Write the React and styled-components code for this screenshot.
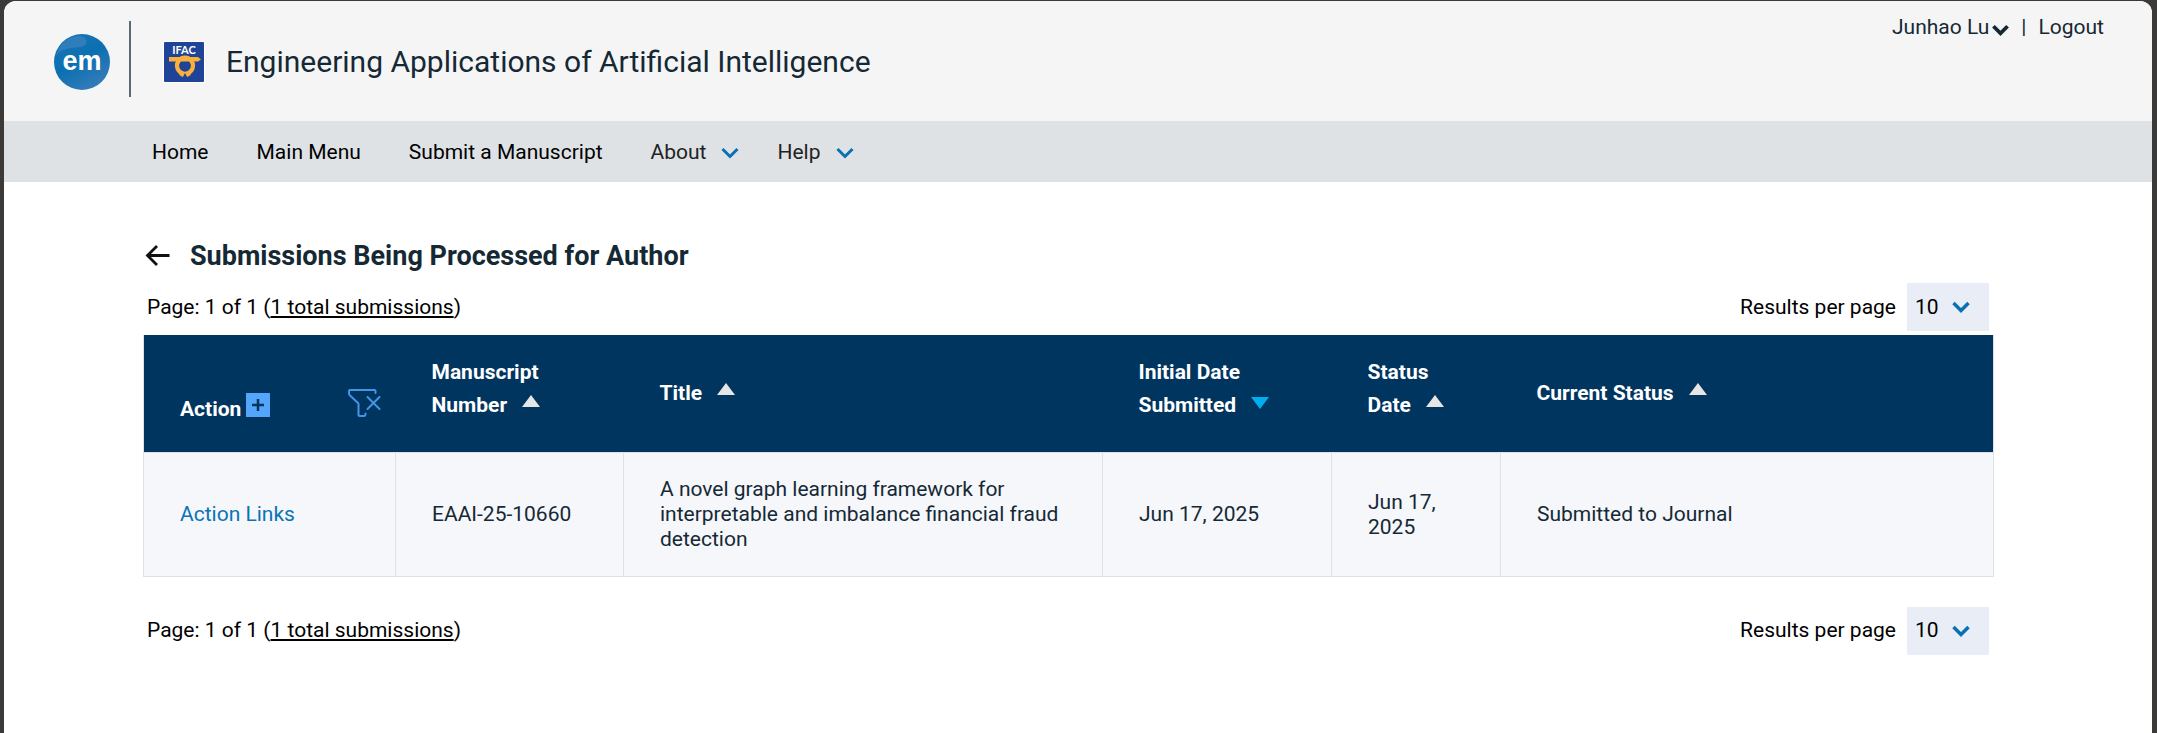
import React from "react";
import styled, { createGlobalStyle } from "styled-components";

const GlobalStyle = createGlobalStyle`
  *, *::before, *::after { box-sizing: border-box; }
  html { background: #3b3a39; }
  body { margin: 0; font-family: Roboto, "Liberation Sans", sans-serif; font-size: 21px; line-height: 25px; color: #000; }
  a { color: inherit; text-decoration: none; }
  button { font: inherit; color: inherit; background: none; border: 0; padding: 0; cursor: pointer; }
`;

const Frame = styled.div`
  min-height: 100vh;
  padding: 1px 5px 0 4px;
  display: flex;
`;

const Page = styled.div`
  flex: 1;
  min-width: 0;
  background: #fff;
  border-radius: 12px 12px 0 0;
  overflow: hidden;
`;

const Header = styled.header`
  display: flex;
  justify-content: space-between;
  align-items: flex-start;
  min-height: 120px;
  padding: 0 48px;
  background: #f5f5f5;
  color: #152935;
`;

const Brand = styled.div`
  display: flex;
  align-items: center;
  min-height: 82px;
  margin-top: 20px;
`;

const BrandRule = styled.span`
  align-self: flex-start;
  width: 2px;
  height: 76px;
  margin: 0 32px 0 17px;
  background: #5b6b73;
`;

const JournalName = styled.h1`
  margin: 0 0 0 21px;
  font-size: 30px;
  line-height: 40px;
  font-weight: 400;
`;

const Account = styled.div`
  display: flex;
  align-items: center;
  padding-top: 14px;
  gap: 12px;
`;

const AccountButton = styled.button`
  display: flex;
  align-items: center;
  gap: 3px;

  & > svg { margin-top: 5px; }
`;

const Nav = styled.nav`
  display: flex;
  align-items: center;
  gap: 48px;
  min-height: 61px;
  padding: 2px 148px 0;
  background: #dee2e5;
`;

const NavMenu = styled.button`
  display: flex;
  align-items: center;
  gap: 15px;
  color: #222;

  & + & { margin-left: -10px; }
`;

const Main = styled.main`
  padding: 58px 158px 40px 139px;
`;

const TitleRow = styled.div`
  display: flex;
  align-items: center;
  gap: 19px;
  padding-left: 2px;
`;

const BackButton = styled.button`
  display: flex;
`;

const PageTitle = styled.h2`
  margin: 0;
  font-size: 27px;
  line-height: 32px;
  font-weight: 700;
  color: #152935;
`;

const Pager = styled.div`
  display: flex;
  justify-content: space-between;
  align-items: center;
  padding: 0 5px 0 4px;
  margin-top: ${(p) => p.$gap}px;
`;

const TotalLink = styled.a`
  text-decoration: underline;
  text-decoration-thickness: 2px;
  text-underline-offset: 2px;
  text-decoration-skip-ink: none;
`;

const PerPage = styled.label`
  display: flex;
  align-items: center;
  gap: 11px;
`;

const SelectWrap = styled.span`
  display: grid;
  align-items: center;
  width: 82px;
  height: 48px;
  background: #e9eef6;

  & > * { grid-area: 1 / 1; }
  & > svg { justify-self: end; margin-right: 19px; pointer-events: none; }
`;

const Select = styled.select`
  appearance: none;
  width: 100%;
  height: 100%;
  padding: 0 8px;
  border: 0;
  background: transparent;
  font: inherit;
  color: #000;
`;

const Table = styled.table`
  width: 100%;
  margin-top: 4px;
  table-layout: fixed;
  border-collapse: collapse;
  border: 1px solid #dee2e6;
  border-top: 0;
`;

const Col = styled.col`
  width: ${(p) => p.$w};
`;

const HeadCell = styled.th`
  height: 117px;
  padding: 0 36px ${(p) => (p.$twoLine ? 9 : 0)}px;
  background: #003560;
  color: #fff;
  text-align: left;
  vertical-align: middle;
  font-weight: 700;
  line-height: 33px;
`;

const ActionHead = styled.div`
  display: flex;
  justify-content: space-between;
  align-items: flex-end;
  padding-top: 28px;
  margin-right: -21px;
`;

const ActionLabel = styled.span`
  display: flex;
  align-items: flex-end;
  gap: 5px;
`;

const ExpandButton = styled.button`
  display: flex;
  align-items: center;
  justify-content: center;
  width: 24px;
  height: 24px;
  margin-bottom: 9px;
  background: #54a6fb;
`;

const FilterButton = styled.button`
  display: flex;
  margin-bottom: 9px;
`;

const SortButton = styled.button`
  text-align: left;
  font-weight: 700;
  line-height: 33px;

  & > svg { margin-left: 15px; vertical-align: ${(p) => (p.$down ? 3 : 5)}px; }
`;

const Cell = styled.td`
  height: 124px;
  padding: 1px 36px 0;
  border: 1px solid #dee2e6;
  background: #f5f7fb;
  color: #152935;
  vertical-align: middle;
`;

const ActionLink = styled.a`
  color: #0a73b5;
`;

const Chevron = ({ color = "#0a6fb3", w = 18, stroke = 3 }) => (
  <svg width={w} height="12" viewBox="0 0 18 12" aria-hidden="true">
    <path d="M1.5 2 L9 9.5 L16.5 2" fill="none" stroke={color} strokeWidth={stroke} />
  </svg>
);

const SortArrow = ({ down }) => (
  <svg width="18" height="12" viewBox="0 0 18 12" aria-hidden="true">
    {down ? <path d="M0 0 H18 L9 12 Z" fill="#00aeef" /> : <path d="M0 12 H18 L9 0 Z" fill="#e6e6e6" />}
  </svg>
);

const EmLogo = () => (
  <svg width="60" height="60" viewBox="0 0 60 60" role="img" aria-label="em">
    <defs>
      <linearGradient id="emFill" x1="0.2" y1="0" x2="0.8" y2="1">
        <stop offset="0" stopColor="#1a74b6" />
        <stop offset="0.45" stopColor="#0a70b1" />
        <stop offset="1" stopColor="#3b7dbb" />
      </linearGradient>
    </defs>
    <circle cx="30" cy="30" r="28" fill="url(#emFill)" />
    <path d="M4 24 C7 11 17 4 28 4 C36 5 37 13 29 15 C19 16 9 16 4 24 Z" fill="#2f7dbb" />
    <text x="30" y="38" textAnchor="middle" fontFamily="Liberation Sans, sans-serif" fontWeight="700" fontSize="27" fill="#fff">em</text>
  </svg>
);

const IfacLogo = () => (
  <svg width="42" height="42" viewBox="0 0 42 42" role="img" aria-label="IFAC">
    <rect width="42" height="42" rx="2" fill="#fff" />
    <rect x="1" y="1" width="40" height="40" rx="1" fill="#1f4397" />
    <text x="21" y="13" textAnchor="middle" fontFamily="Lato, sans-serif" fontWeight="700" fontSize="11" fill="#fff">IFAC</text>
    <path d="M6 16 H35 L38 18.5 L35 20.5 H6 Z" fill="#fbb03b" />
    <path d="M18 35 L19.500 32.300 A8 8 0 1 1 24.500 32.300 L26 35" fill="none" stroke="#fbb03b" strokeWidth="4.200" />
  </svg>
);

const BackArrow = () => (
  <svg width="26" height="22" viewBox="0 0 26 22" aria-hidden="true">
    <path d="M24.500 10.500 H2.500 M12 1 L2.500 10.500 L12 20" fill="none" stroke="#111" strokeWidth="2.800" />
  </svg>
);

const FilterClear = () => (
  <svg width="33" height="28" viewBox="0 0 33 28" fill="none" stroke="#4595e6" strokeWidth="2" strokeLinejoin="round" strokeLinecap="round" aria-hidden="true">
    <path d="M27.500 4 V2 Q27.500 1 26.500 1 H2 Q1 1 1 2 V4.500 Q1 5.500 2 6.500 L10 14 Q10.500 14.500 10.500 15.500 V26 Q10.500 27 11.500 27 H16 Q17.500 27 17.500 24.500" />
    <path d="M19.500 8 L31.500 20 M31.500 8 L19.500 20" />
  </svg>
);

const PagerBar = ({ gap, id }) => (
  <Pager $gap={gap}>
    <span>
      Page: 1 of 1 (<TotalLink href="#all">1 total submissions</TotalLink>)
    </span>
    <PerPage htmlFor={id}>
      Results per page
      <SelectWrap>
        <Select id={id} defaultValue="10">
          <option>10</option>
          <option>25</option>
          <option>50</option>
        </Select>
        <Chevron stroke={3.5} />
      </SelectWrap>
    </PerPage>
  </Pager>
);

const columns = [
  { label: "Manuscript Number", twoLine: true },
  { label: "Title" },
  { label: "Initial Date Submitted", twoLine: true, down: true },
  { label: "Status Date", twoLine: true },
  { label: "Current Status" },
];

const widths = ["252px", "228px", "479px", "229px", "169px", "auto"];

export default function App() {
  return (
    <>
      <GlobalStyle />
      <Frame>
        <Page>
          <Header>
            <Brand>
              <EmLogo />
              <BrandRule />
              <IfacLogo />
              <JournalName>Engineering Applications of Artificial Intelligence</JournalName>
            </Brand>
            <Account>
              <AccountButton>
                Junhao Lu
                <Chevron color="#152935" w={17} stroke={4} />
              </AccountButton>
              <span>|</span>
              <a href="#logout">Logout</a>
            </Account>
          </Header>
          <Nav>
            <a href="#home">Home</a>
            <a href="#main">Main Menu</a>
            <a href="#submit">Submit a Manuscript</a>
            <NavMenu>About <Chevron /></NavMenu>
            <NavMenu>Help <Chevron /></NavMenu>
          </Nav>
          <Main>
            <TitleRow>
              <BackButton aria-label="Back"><BackArrow /></BackButton>
              <PageTitle>Submissions Being Processed for Author</PageTitle>
            </TitleRow>
            <PagerBar gap={11} id="per-page-top" />
            <Table>
              <colgroup>
                {widths.map((w, i) => <Col key={i} $w={w} />)}
              </colgroup>
              <thead>
                <tr>
                  <HeadCell>
                    <ActionHead>
                      <ActionLabel>
                        Action
                        <ExpandButton aria-label="Expand">
                          <svg width="12" height="12" viewBox="0 0 12 12"><path d="M6 0 V12 M0 6 H12" stroke="#003560" strokeWidth="2.500" /></svg>
                        </ExpandButton>
                      </ActionLabel>
                      <FilterButton aria-label="Clear filters"><FilterClear /></FilterButton>
                    </ActionHead>
                  </HeadCell>
                  {columns.map((c) => (
                    <HeadCell key={c.label} $twoLine={c.twoLine}>
                      <SortButton $down={c.down}>{c.label}<SortArrow down={c.down} /></SortButton>
                    </HeadCell>
                  ))}
                </tr>
              </thead>
              <tbody>
                <tr>
                  <Cell><ActionLink href="#actions">Action Links</ActionLink></Cell>
                  <Cell>EAAI-25-10660</Cell>
                  <Cell>A novel graph learning framework for interpretable and imbalance financial fraud detection</Cell>
                  <Cell>Jun 17, 2025</Cell>
                  <Cell>Jun 17, 2025</Cell>
                  <Cell>Submitted to Journal</Cell>
                </tr>
              </tbody>
            </Table>
            <PagerBar gap={30} id="per-page-bottom" />
          </Main>
        </Page>
      </Frame>
    </>
  );
}
